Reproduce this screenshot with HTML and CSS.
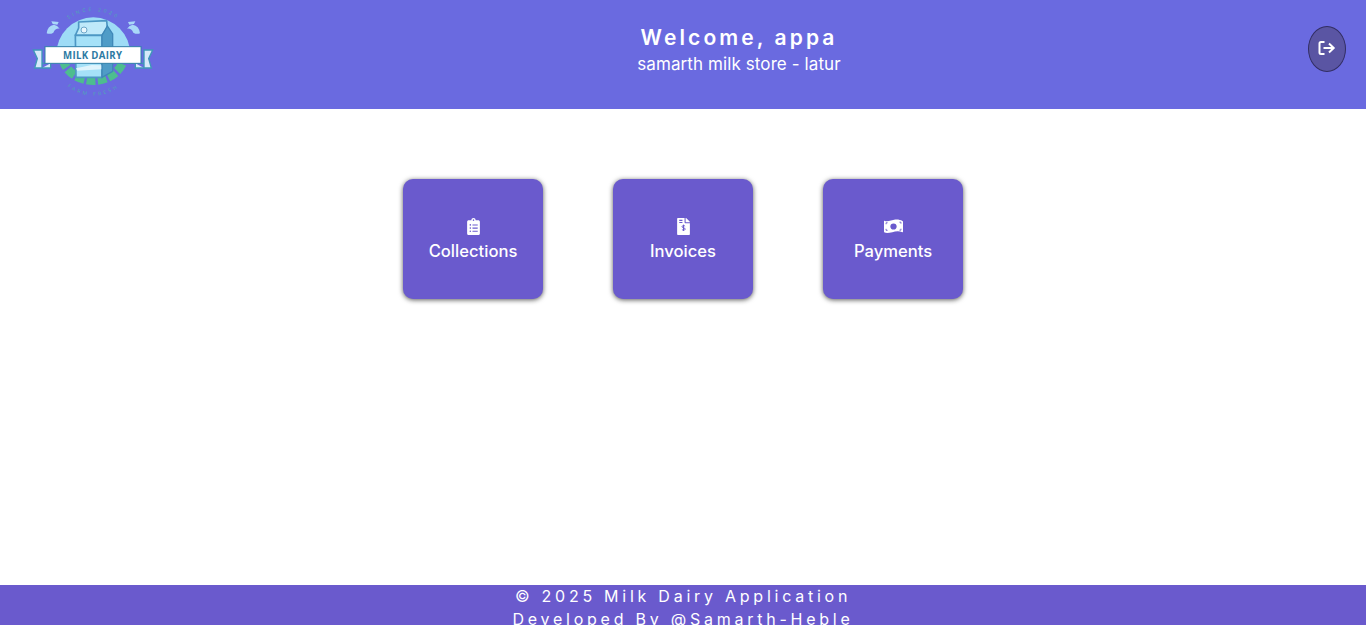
FILE: index.html
```html
<!DOCTYPE html>
<html lang="en">

<head>
    <meta charset="UTF-8">
    <meta name="viewport" content="width=device-width, initial-scale=1.0">
    <title>Milk Dairy</title>
    <link rel="stylesheet" href="styles.css">
</head>

<body>
    <header class="topbar">
        <div class="logo">
            <svg viewBox="0 0 450 327" width="150" height="109" aria-label="Milk Dairy logo">
                <defs>
                    <clipPath id="belowBanner"><rect x="0" y="190" width="450" height="137"></rect></clipPath>
                    <clipPath id="aboveBanner"><rect x="0" y="0" width="450" height="190"></rect></clipPath>
                    <path id="arcTop" d="M118 88 A122 122 0 0 1 322 88"></path>
                    <path id="arcBottom" d="M112 222 A122 122 0 0 0 328 222"></path>
                </defs>
                <ellipse cx="220" cy="160" rx="94" ry="82" fill="none" stroke="#4dbd8f" stroke-width="26" stroke-dasharray="26 7" clip-path="url(#belowBanner)"></ellipse>
                <circle cx="220" cy="163" r="111" fill="#9edcf6" clip-path="url(#aboveBanner)"></circle>
                <path d="M94 64 L116 66 L112 74 L98 72 Z M80 100 Q82 78 102 74 Q112 76 119 86 Q106 84 100 98 Q90 104 80 100 Z" fill="#a9d8f8"></path>
                <path d="M346 64 L324 66 L328 74 L342 72 Z M360 100 Q358 78 338 74 Q328 76 321 86 Q334 84 340 98 Q350 104 360 100 Z" fill="#a9d8f8"></path>
                <path d="M176 66 L260 62 L262 84 L246 106 L166 106 L176 84 Z" fill="#bfe9fa" stroke="#4d97c4" stroke-width="5" stroke-linejoin="round"></path>
                <path d="M166 106 H246 V232 H168 Z" fill="#a5e1f8" stroke="#4d97c4" stroke-width="5"></path>
                <path d="M246 106 L262 78 L278 102 V214 L246 232 Z" fill="#4f9cc7" stroke="#3f88b8" stroke-width="4"></path>
                <circle cx="192" cy="90" r="9" fill="#e8f6fc" stroke="#6da6c8" stroke-width="3"></circle>
                <path d="M168 205 L215 195 L244 196 V208 L172 212 Z" fill="#dff4fc"></path>
                <path d="M66 150 H40 L52 176 L44 204 H66 Z M66 190 H75 M66 204 H92 V190" fill="#d6e9fa" stroke="#3f97b8" stroke-width="4"></path>
                <path d="M372 150 H398 L386 176 L394 204 H372 Z M372 190 H363 M372 204 H346 V190" fill="#d6e9fa" stroke="#3f97b8" stroke-width="4"></path>
                <rect x="75" y="140" width="288" height="50" fill="#ffffff" stroke="#2f7fa8" stroke-width="3"></rect>
                <text class="logo-name" x="218" y="177" text-anchor="middle">MILK DAIRY</text>
                <text class="logo-small"><textPath href="#arcTop" startOffset="50%" text-anchor="middle">SINCE 2020</textPath></text>
                <text class="logo-small"><textPath href="#arcBottom" startOffset="50%" text-anchor="middle">FARM FRESH</textPath></text>
            </svg>
        </div>
        <div class="greeting">
            <h1>Welcome, appa</h1>
            <p>samarth milk store - latur</p>
        </div>
        <button class="logout" type="button" aria-label="Logout">
            <svg class="logout-icon" viewBox="0 0 18 16" width="18" height="16" fill="none" stroke="#ffffff" stroke-width="2">
                <path d="M6.5 2 H3 Q1.5 2 1.5 3.5 V12.5 Q1.5 14 3 14 H6.5"></path>
                <path d="M5.5 8 H15.5 M11 3.5 L15.7 8 L11 12.5"></path>
            </svg>
        </button>
    </header>

    <main class="content">
        <a class="tile" href="#">
            <svg class="tile-icon" viewBox="0 0 384 512" fill="#ffffff">
                <path d="M336 64h-80c0-35.3-28.7-64-64-64s-64 28.7-64 64H48C21.5 64 0 85.5 0 112v352c0 26.5 21.5 48 48 48h288c26.5 0 48-21.5 48-48V112c0-26.5-21.5-48-48-48zM96 424c-13.3 0-24-10.7-24-24s10.7-24 24-24 24 10.7 24 24-10.7 24-24 24zm0-96c-13.3 0-24-10.7-24-24s10.7-24 24-24 24 10.7 24 24-10.7 24-24 24zm0-96c-13.3 0-24-10.7-24-24s10.7-24 24-24 24 10.7 24 24-10.7 24-24 24zm96-192c13.3 0 24 10.7 24 24s-10.7 24-24 24-24-10.7-24-24 10.7-24 24-24zm128 368c0 4.4-3.6 8-8 8H168c-4.4 0-8-3.6-8-8v-16c0-4.4 3.6-8 8-8h144c4.4 0 8 3.6 8 8v16zm0-96c0 4.4-3.6 8-8 8H168c-4.4 0-8-3.6-8-8v-16c0-4.4 3.6-8 8-8h144c4.4 0 8 3.6 8 8v16zm0-96c0 4.4-3.6 8-8 8H168c-4.4 0-8-3.6-8-8v-16c0-4.4 3.6-8 8-8h144c4.4 0 8 3.6 8 8v16z"></path>
            </svg>
            <span>Collections</span>
        </a>
        <a class="tile" href="#">
            <svg class="tile-icon" viewBox="0 0 384 512" fill="#ffffff">
                <path d="M224 136V0H24C10.7 0 0 10.7 0 24v464c0 13.3 10.7 24 24 24h336c13.3 0 24-10.7 24-24V160H248c-13.2 0-24-10.8-24-24z"></path>
                <path d="M384 121.9c0-6.3-2.5-12.4-7-16.9L279.1 7c-4.5-4.5-10.6-7-17-7H256v128h128z"></path>
                <path d="M64 72h96M64 136h96" stroke="#6a5acd" stroke-width="32"></path>
                <path d="M240 248c-12-16-30-20-48-20-24 0-44 12-44 34 0 44 96 24 96 70 0 22-22 34-48 34-20 0-40-6-52-22M192 200v190" fill="none" stroke="#6a5acd" stroke-width="30"></path>
            </svg>
            <span>Invoices</span>
        </a>
        <a class="tile" href="#">
            <svg class="tile-icon" viewBox="0 0 640 512" fill="#ffffff">
                <path d="M18 66C130 118 250 34 380 22c100-8 180 16 240 46 12 7 20 14 20 30v330c0 14-8 22-20 18-110-44-230-32-340 0-110 30-200 40-262 12-12-5-18-14-18-30V82c0-12 8-20 18-16z"></path>
                <circle cx="320" cy="256" r="105" fill="#6a5acd"></circle>
                <path d="M70 130h50M70 130v50M570 110h-50M570 110v50M70 385h50M70 385v-50M570 380h-50M570 380v-50" stroke="#6a5acd" stroke-width="30" fill="none"></path>
            </svg>
            <span>Payments</span>
        </a>
    </main>

    <footer class="bottombar">
        <p>© 2025 Milk Dairy Application</p>
        <p>Developed By @Samarth-Heble</p>
    </footer>
</body>

</html>
```

FILE: styles.css
```css
body {
    font-family: Inter, "Open Sans", sans-serif;
    display: flex;
    flex-direction: column;
    height: 100vh;
    margin: 0;
    overflow: hidden;
    background-color: #ffffff;
    color: #ffffff;
}

.topbar {
    display: flex;
    justify-content: space-between;
    align-items: center;
    height: 109px;
    padding: 0 20px 11px;
    box-sizing: border-box;
    background-color: #6a6ae0;
}

.logo {
    width: 150px;
    height: 109px;
    margin-bottom: -11px;
}

.logo-name {
    font-family: "Open Sans", sans-serif;
    font-size: 29px;
    font-weight: 700;
    letter-spacing: 1px;
    fill: #2c7aa3;
}

.logo-small {
    font-family: "Open Sans", sans-serif;
    font-size: 15px;
    letter-spacing: 8px;
    fill: #4aa9b5;
}

.greeting {
    padding-top: 1px;
    text-align: center;
}

.greeting h1 {
    margin: 0;
    font-size: 21px;
    font-weight: 600;
    letter-spacing: 3.1px;
    line-height: 28px;
}

.greeting p {
    margin: 0;
    font-size: 17px;
    font-weight: 400;
    letter-spacing: 0.1px;
    line-height: 24px;
}

.logout {
    display: flex;
    justify-content: center;
    align-items: center;
    width: 38px;
    height: 46px;
    padding: 0;
    border: 1px solid #322e63;
    border-radius: 50%;
    background-color: #5a55a3;
    cursor: pointer;
}

.logout-icon {
    margin-bottom: 2px;
}

.content {
    flex: 1;
    display: flex;
    justify-content: center;
    align-items: flex-start;
    gap: 70px;
    padding-top: 70px;
}

.tile {
    display: flex;
    flex-direction: column;
    justify-content: center;
    align-items: center;
    gap: 4px;
    width: 140px;
    height: 120px;
    padding-top: 2px;
    box-sizing: border-box;
    border-radius: 10px;
    background-color: #6a5acd;
    box-shadow: 0 1px 5px rgba(0, 0, 0, 0.65);
    color: #ffffff;
    font-size: 16.6px;
    font-weight: 500;
    line-height: 24px;
    text-decoration: none;
}

.tile-icon {
    width: 19px;
    height: 17px;
}

.bottombar {
    height: 40px;
    overflow: hidden;
    background-color: #6a5acd;
    text-align: center;
    font-size: 16px;
    letter-spacing: 3.75px;
    line-height: 23px;
}

.bottombar p {
    margin: 0;
}
```
